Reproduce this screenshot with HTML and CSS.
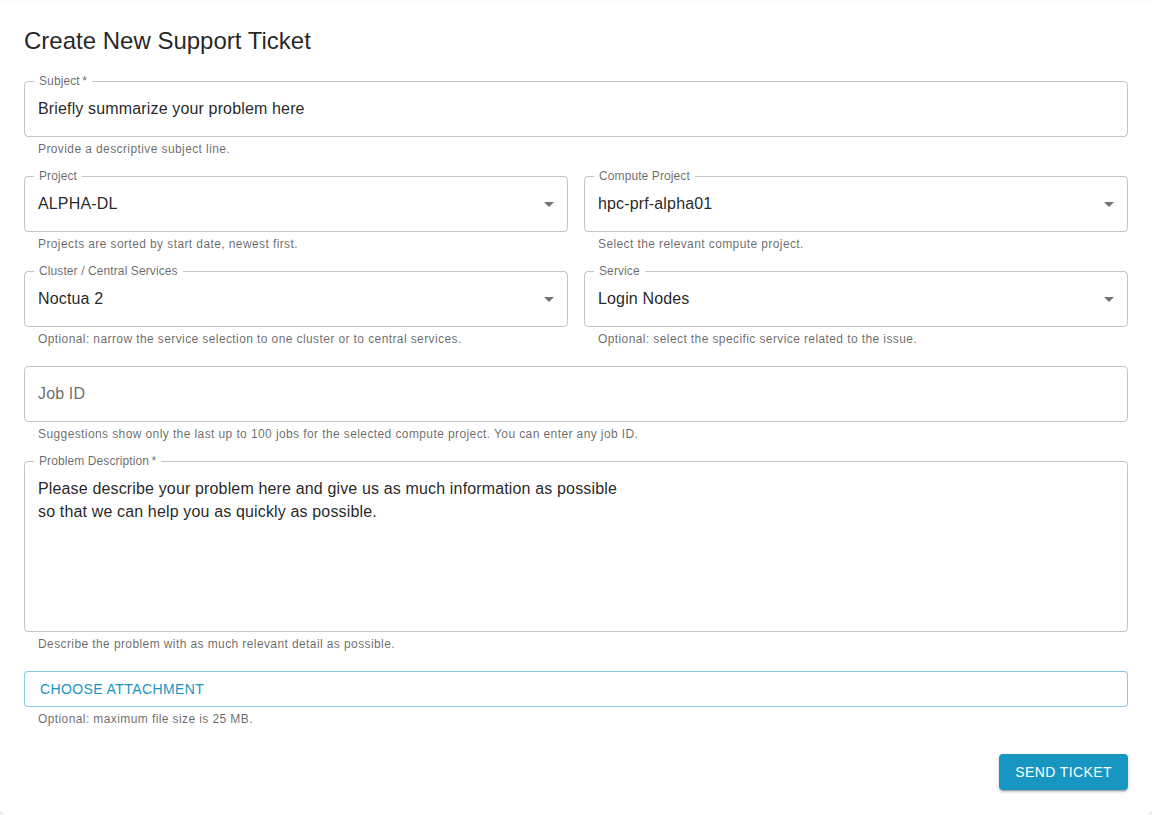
FILE: index.html
```html
<!DOCTYPE html>
<html lang="en">
<head>
    <meta charset="UTF-8">
    <meta name="viewport" content="width=device-width, initial-scale=1.0">
    <title>Create New Support Ticket</title>
    <link rel="stylesheet" href="styles.css">
</head>
<body>

    <div class="card">
        <h1>Create New Support Ticket</h1>

        <!-- Subject -->
        <div class="field">
            <div class="box">
                <label class="float" for="subject">Subject&thinsp;*</label>
                <input type="text" id="subject" value="Briefly summarize your problem here">
            </div>
            <p class="helper">Provide a descriptive subject line.</p>
        </div>

        <!-- Project / Compute project -->
        <div class="row">
            <div class="field">
                <div class="box select">
                    <span class="float">Project</span>
                    <span class="value">ALPHA-DL</span>
                    <svg class="arrow" viewBox="0 0 24 24"><path d="M7 10l5 5 5-5z"></path></svg>
                </div>
                <p class="helper">Projects are sorted by start date, newest first.</p>
            </div>
            <div class="field">
                <div class="box select">
                    <span class="float">Compute Project</span>
                    <span class="value">hpc-prf-alpha01</span>
                    <svg class="arrow" viewBox="0 0 24 24"><path d="M7 10l5 5 5-5z"></path></svg>
                </div>
                <p class="helper">Select the relevant compute project.</p>
            </div>
        </div>

        <!-- Cluster / Service -->
        <div class="row">
            <div class="field">
                <div class="box select">
                    <span class="float">Cluster / Central Services</span>
                    <span class="value">Noctua 2</span>
                    <svg class="arrow" viewBox="0 0 24 24"><path d="M7 10l5 5 5-5z"></path></svg>
                </div>
                <p class="helper">Optional: narrow the service selection to one cluster or to central services.</p>
            </div>
            <div class="field">
                <div class="box select">
                    <span class="float">Service</span>
                    <span class="value">Login Nodes</span>
                    <svg class="arrow" viewBox="0 0 24 24"><path d="M7 10l5 5 5-5z"></path></svg>
                </div>
                <p class="helper">Optional: select the specific service related to the issue.</p>
            </div>
        </div>

        <!-- Job ID -->
        <div class="field">
            <div class="box">
                <input type="text" id="jobId" placeholder="Job ID">
            </div>
            <p class="helper">Suggestions show only the last up to 100 jobs for the selected compute project. You can enter any job ID.</p>
        </div>

        <!-- Description -->
        <div class="field">
            <div class="box">
                <label class="float" for="description">Problem Description&thinsp;*</label>
                <textarea id="description" rows="6">Please describe your problem here and give us as much information as possible
so that we can help you as quickly as possible.</textarea>
            </div>
            <p class="helper">Describe the problem with as much relevant detail as possible.</p>
        </div>

        <!-- Attachment -->
        <div class="field">
            <button class="btn-outline">Choose Attachment</button>
            <p class="helper">Optional: maximum file size is 25 MB.</p>
        </div>

        <div class="actions">
            <button class="btn-primary">Send Ticket</button>
        </div>
    </div>

</body>
</html>
```

FILE: styles.css
```css
body {
    font-family: "Liberation Sans", Arial, sans-serif;
    background-color: #fff;
    color: rgba(0, 0, 0, 0.87);
    margin: 0;
    padding: 1px 0 0 0;
}
.card {
    background-color: #fff;
    padding: 24px;
    border-radius: 4px;
    box-shadow: 0 2px 1px -1px rgba(0, 0, 0, 0.2), 0 1px 1px 0 rgba(0, 0, 0, 0.14), 0 1px 3px 0 rgba(0, 0, 0, 0.12);
}
h1 {
    font-size: 24px;
    font-weight: 400;
    line-height: 32px;
    margin: 0 0 24px;
}
.field {
    margin-bottom: 16px;
}
.row {
    display: grid;
    grid-template-columns: 1fr 1fr;
    gap: 16px;
}
.box {
    position: relative;
    border: 1px solid rgba(0, 0, 0, 0.23);
    border-radius: 4px;
}
.float {
    position: absolute;
    left: 9px;
    top: -9px;
    padding: 0 5px;
    background-color: #fff;
    font-size: 12px;
    line-height: 16px;
    letter-spacing: 0.1px;
    color: rgba(0, 0, 0, 0.6);
}
.box input,
.box textarea {
    display: block;
    width: 100%;
    box-sizing: border-box;
    border: none;
    outline: none;
    background: transparent;
    font-family: inherit;
    font-size: 16px;
    letter-spacing: 0.15px;
    color: rgba(0, 0, 0, 0.87);
    padding: 15.5px 13px;
    height: 54px;
    line-height: 23px;
}
.box input::placeholder {
    color: rgba(0, 0, 0, 0.6);
    opacity: 1;
}
.box textarea {
    height: 169px;
    resize: none;
    overflow: hidden;
}
.select {
    display: flex;
    align-items: center;
    height: 54px;
}
.select .value {
    padding: 0 13px;
    font-size: 16px;
    letter-spacing: 0.15px;
    line-height: 23px;
}
.arrow {
    position: absolute;
    right: 6px;
    top: 15px;
    width: 24px;
    height: 24px;
    fill: rgba(0, 0, 0, 0.54);
}
.helper {
    margin: 3px 14px 0;
    font-size: 12px;
    line-height: 1.66;
    letter-spacing: 0.4px;
    color: rgba(0, 0, 0, 0.6);
}
.btn-outline {
    display: block;
    width: 100%;
    text-align: left;
    padding: 5px 15px;
    background: #fff;
    border: 1px solid rgba(23, 150, 193, 0.5);
    border-radius: 4px;
    color: #1796c1;
    font-family: inherit;
    font-size: 14px;
    font-weight: 400;
    line-height: 24.5px;
    letter-spacing: 0.4px;
    text-transform: uppercase;
    cursor: pointer;
}
.actions {
    display: flex;
    justify-content: flex-end;
    margin-top: 24px;
}
.btn-primary {
    padding: 6px 16px;
    background-color: #1796c1;
    color: #fff;
    border: none;
    border-radius: 4px;
    font-family: inherit;
    font-size: 14px;
    font-weight: 400;
    line-height: 24.5px;
    letter-spacing: 0.4px;
    text-transform: uppercase;
    cursor: pointer;
    box-shadow: 0 3px 1px -2px rgba(0, 0, 0, 0.2), 0 2px 2px 0 rgba(0, 0, 0, 0.14), 0 1px 5px 0 rgba(0, 0, 0, 0.12);
}
```
